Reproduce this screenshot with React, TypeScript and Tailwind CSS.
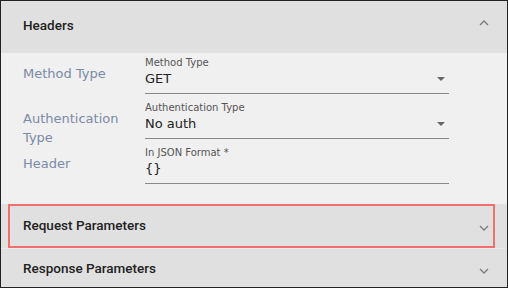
import React from "react"

const labelFont = { fontFamily: '"DejaVu Sans", sans-serif' }

function ChevronUp() {
  return (
    <svg width="10" height="6" viewBox="0 0 10 6" className="block">
      <polyline points="1,5 5,1 9,5" fill="none" stroke="#7a7a7a" strokeWidth="1.3" />
    </svg>
  )
}

function ChevronDown() {
  return (
    <svg width="10" height="6" viewBox="0 0 10 6" className="block">
      <polyline points="1,1 5,5 9,1" fill="none" stroke="#7a7a7a" strokeWidth="1.3" />
    </svg>
  )
}

function Field({ label, value, select }: { label: string; value: string; select?: boolean }) {
  return (
    <div className="w-[304px] h-[38px] border-b border-[#8a8a8a]" style={labelFont}>
      <div className="text-[10px] leading-[13px] text-[#555]">{label}</div>
      <div className="flex items-center justify-between h-[20px] pr-[4px]">
        <span className="text-[13px] leading-[20px] text-[#222]">{value}</span>
        {select && <span className="w-0 h-0 border-l-[4px] border-r-[4px] border-t-[4px] border-l-transparent border-r-transparent border-t-[#666]" />}
      </div>
    </div>
  )
}

function Row({ label, children }: { label: string; children: React.ReactNode }) {
  return (
    <div className="flex h-[38px]">
      <div className="w-[122px] pt-[8px] pr-[8px] text-[13px] leading-[19px] text-[#7b8aa6]" style={labelFont}>{label}</div>
      {children}
    </div>
  )
}

export default function App() {
  return (
    <div className="w-[508px] h-[288px] border border-[#222] bg-[#f0f0f0] overflow-hidden" style={{ fontFamily: "Roboto, sans-serif" }}>
      <div className="h-[52px] bg-[#e0e0e0] flex items-center justify-between pl-[22px] pr-[18px]">
        <span className="text-[13.5px] font-medium text-[#222] mt-[-4px]">Headers</span>
        <span className="mt-[-9px]"><ChevronUp /></span>
      </div>
      <div className="h-[151px] pt-[3px] pl-[22px] flex flex-col gap-[7px]">
        <Row label="Method Type"><Field label="Method Type" value="GET" select /></Row>
        <Row label="Authentication Type"><Field label="Authentication Type" value="No auth" select /></Row>
        <Row label="Header"><Field label="In JSON Format *" value="{}" /></Row>
      </div>
      <div className="relative h-[44px] bg-[#e0e0e0] flex items-center justify-between pl-[22px] pr-[18px]">
        <span className="text-[13.5px] font-medium text-[#222] mt-[-2px]">Request Parameters</span>
        <span className="mt-[4px]"><ChevronDown /></span>
        <div className="absolute left-[7px] top-0 w-[487px] h-[44px] border-2 border-[#f07070]" />
      </div>
      <div className="h-[40px] bg-[#e0e0e0] border-t border-[#e8e8e8] flex items-center justify-between pl-[22px] pr-[18px]">
        <span className="text-[13.5px] font-medium text-[#222]">Response Parameters</span>
        <span className="mt-[4px]"><ChevronDown /></span>
      </div>
    </div>
  )
}
